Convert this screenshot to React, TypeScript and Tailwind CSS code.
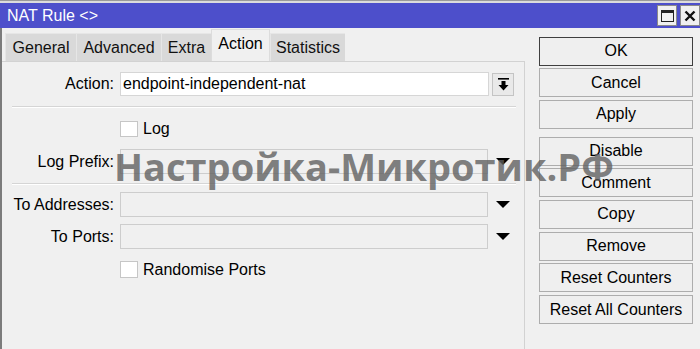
import React from "react";

const font = { fontFamily: '"Liberation Sans", Arial, sans-serif' };

const Tab = ({ label, active, width }: { label: string; active?: boolean; width: string }) => (
  <div
    className={
      active
        ? `${width} h-[32px] flex items-center justify-center bg-[#f0f0f0] border-t border-l border-r border-[#dcdcdc] text-black pb-[3px]`
        : `${width} h-[28px] flex items-center justify-center bg-[#d9d9d9] border-l border-t border-[#e6e6e6] text-[#111]`
    }
  >
    {label}
  </div>
);

const Triangle = () => (
  <svg width="14" height="7" viewBox="0 0 14 7" className="ml-[8px]">
    <polygon points="0,0 14,0 7,7" fill="#000" />
  </svg>
);

const Btn = ({ label, primary }: { label: string; primary?: boolean }) => (
  <div
    className={
      "h-[29px] w-[154px] flex items-center justify-center bg-[#efefef] text-black " +
      (primary ? "border border-[#3f3f3f]" : "border border-[#adadad]")
    }
  >
    {label}
  </div>
);

export default function App() {
  return (
    <div className="w-[700px] h-[349px] overflow-hidden bg-[#f0f0f0] relative text-[16px] leading-none" style={font}>
      {/* strip from window behind */}
      <div className="h-[3px] bg-[#dcdcdc] border-t border-[#9a9a9a]" />

      {/* title bar */}
      <div className="h-[25px] bg-[#4d4fcb] flex items-center justify-between pl-[7px] pr-0">
        <span className="text-white">NAT Rule &lt;&gt;</span>
        <div className="flex items-center gap-[3px] h-full">
          <div className="w-[20px] h-[21px] bg-[#f0f0f0] border border-[#8a8a8a] flex items-center justify-center">
            <div className="w-[13px] h-[12px] border border-[#222] border-t-[3px]" />
          </div>
          <div className="w-[20px] h-[21px] bg-[#f0f0f0] border border-[#8a8a8a] flex items-center justify-center">
            <svg width="12" height="12" viewBox="0 0 12 12">
              <path d="M1.5 1.5 L10.5 10.5 M10.5 1.5 L1.5 10.5" stroke="#111" strokeWidth="2.4" />
            </svg>
          </div>
        </div>
      </div>

      {/* body */}
      <div className="flex h-[321px] border-l-2 border-[#7c7c7c]">
        {/* left: tabs + panel */}
        <div className="w-[523px] flex flex-col">
          <div className="h-[33px] flex items-end pl-[3px]">
            <Tab label="General" width="w-[71px]" />
            <Tab label="Advanced" width="w-[85px]" />
            <Tab label="Extra" width="w-[50px]" />
            <Tab label="Action" width="w-[59px]" active />
            <Tab label="Statistics" width="w-[75px]" />
          </div>

          <div className="flex-1 border-t border-r border-[#d2d2d2] pt-[10px]">
            {/* Action */}
            <div className="flex items-center h-[24px]">
              <div className="w-[112px] text-right">Action:</div>
              <div className="ml-[6px] w-[369px] h-[24px] bg-white border border-[#d6d6d6] flex items-center pl-[2px]">
                endpoint-independent-nat
              </div>
              <div className="ml-[3px] w-[22px] h-[23px] bg-[#e9e9e9] border border-[#c4c4c4] flex items-center justify-center">
                <svg width="11" height="13" viewBox="0 0 11 13">
                  <rect x="0" y="0" width="11" height="1.6" fill="#000" />
                  <polygon points="3.5,3 7.5,3 7.5,7 10.5,7 5.5,12.5 0.5,7 3.5,7" fill="#000" />
                </svg>
              </div>
            </div>

            <div className="mt-[10px] ml-[10px] w-[504px] h-[2px] border-t border-[#d5d5d5] border-b border-b-white" />

            {/* Log */}
            <div className="mt-[13px] flex items-center h-[16px]">
              <div className="ml-[118px] w-[18px] h-[16px] bg-white border border-[#c6c6c6]" />
              <span className="ml-[5px]">Log</span>
            </div>

            {/* Log Prefix */}
            <div className="mt-[12px] flex items-center h-[25px]">
              <div className="w-[112px] text-right">Log Prefix:</div>
              <div className="ml-[6px] w-[368px] h-[25px] border border-[#cdcdcd]" />
              <Triangle />
            </div>

            <div className="mt-[9px] ml-[10px] w-[504px] h-[2px] border-t border-[#d5d5d5] border-b border-b-white" />

            {/* To Addresses */}
            <div className="mt-[7px] flex items-center h-[25px]">
              <div className="w-[112px] text-right">To Addresses:</div>
              <div className="ml-[6px] w-[368px] h-[25px] border border-[#cdcdcd]" />
              <Triangle />
            </div>

            {/* To Ports */}
            <div className="mt-[7px] flex items-center h-[25px]">
              <div className="w-[112px] text-right">To Ports:</div>
              <div className="ml-[6px] w-[368px] h-[25px] border border-[#cdcdcd]" />
              <Triangle />
            </div>

            {/* Randomise Ports */}
            <div className="mt-[12px] flex items-center h-[17px]">
              <div className="ml-[118px] w-[18px] h-[17px] bg-white border border-[#c6c6c6]" />
              <span className="ml-[5px]">Randomise Ports</span>
            </div>
          </div>
        </div>

        {/* right: buttons */}
        <div className="flex flex-col pl-[14px] pt-[8.5px] gap-[2.7px]">
          <Btn label="OK" primary />
          <Btn label="Cancel" />
          <Btn label="Apply" />
          <div className="mt-[5px]">
            <Btn label="Disable" />
          </div>
          <Btn label="Comment" />
          <Btn label="Copy" />
          <Btn label="Remove" />
          <Btn label="Reset Counters" />
          <Btn label="Reset All Counters" />
        </div>
      </div>

      {/* watermark */}
      <div
        className="absolute left-[114px] top-[147px] text-[38px] font-bold leading-none text-[rgba(95,95,95,0.8)] whitespace-nowrap pointer-events-none"
        style={{ fontFamily: '"Open Sans", "Noto Sans", sans-serif' }}
      >
        Настройка-Микротик.РФ
      </div>
    </div>
  );
}
